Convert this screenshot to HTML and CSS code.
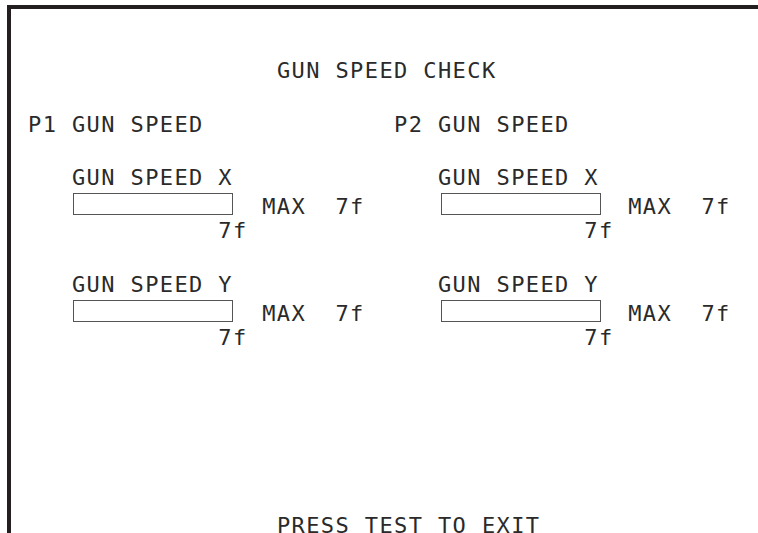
FILE: index.html
```html
<!DOCTYPE html>
<html>
<head>
<meta charset="utf-8">
<link rel="stylesheet" href="styles.css">
</head>
<body>
<div class="screen">
  <div class="title">GUN SPEED CHECK</div>
  <div class="players">
    <div class="player">
      <div class="heading">P1 GUN SPEED</div>
      <div class="group first">
        <div class="label">GUN SPEED X</div>
        <div class="barrow"><div class="bar"></div><span class="max">MAX  7f</span></div>
        <div class="val">7f</div>
      </div>
      <div class="group">
        <div class="label">GUN SPEED Y</div>
        <div class="barrow"><div class="bar"></div><span class="max">MAX  7f</span></div>
        <div class="val">7f</div>
      </div>
    </div>
    <div class="player p2">
      <div class="heading">P2 GUN SPEED</div>
      <div class="group first">
        <div class="label">GUN SPEED X</div>
        <div class="barrow"><div class="bar"></div><span class="max">MAX  7f</span></div>
        <div class="val">7f</div>
      </div>
      <div class="group">
        <div class="label">GUN SPEED Y</div>
        <div class="barrow"><div class="bar"></div><span class="max">MAX  7f</span></div>
        <div class="val">7f</div>
      </div>
    </div>
  </div>
  <div class="footer">PRESS TEST TO EXIT</div>
</div>
</body>
</html>
```
FILE: styles.css
```css
:root {
  --c: 14.64px;
}
html, body {
  margin: 0;
  padding: 0;
  background: #fff;
}
body {
  width: 758px;
  height: 533px;
  overflow: hidden;
  font-family: "DejaVu Sans Mono", monospace;
  font-size: 22px;
  line-height: 22px;
  letter-spacing: 1.4px;
  color: #2a2a2a;
}
.screen {
  margin: 5px 0 0 7px;
  border-top: 4px solid #231f20;
  border-left: 4px solid #231f20;
  height: 528px;
  padding-left: 17px;
  box-sizing: border-box;
  overflow: hidden;
}
.title,
.heading,
.label,
.max,
.val,
.footer {
  white-space: pre;
}
.title {
  margin-top: 51px;
  padding-left: calc(17 * var(--c));
}
.players {
  display: flex;
  margin-top: 32px;
}
.player {
  width: calc(25 * var(--c));
  flex: none;
}
.group.first {
  margin-top: 31px;
}
.group {
  margin-top: 32px;
}
.label {
  padding-left: calc(3 * var(--c));
}
.barrow {
  display: flex;
  margin-top: 4px;
}
.bar {
  flex: none;
  width: 158px;
  height: 20px;
  border: 1px solid #555;
  margin-left: calc(3 * var(--c) + 1px);
  background: #fff;
}
.p2 .bar {
  margin-left: calc(3 * var(--c) + 3px);
}
.max {
  margin-left: calc(13 * var(--c) - 161px);
  padding-top: 3px;
}
.p2 .max {
  margin-left: calc(13 * var(--c) - 163px);
}
.val {
  margin-top: 2px;
  padding-left: calc(13 * var(--c));
}
.footer {
  margin-top: 169px;
  line-height: 16px;
  padding-left: calc(17 * var(--c));
}
```
